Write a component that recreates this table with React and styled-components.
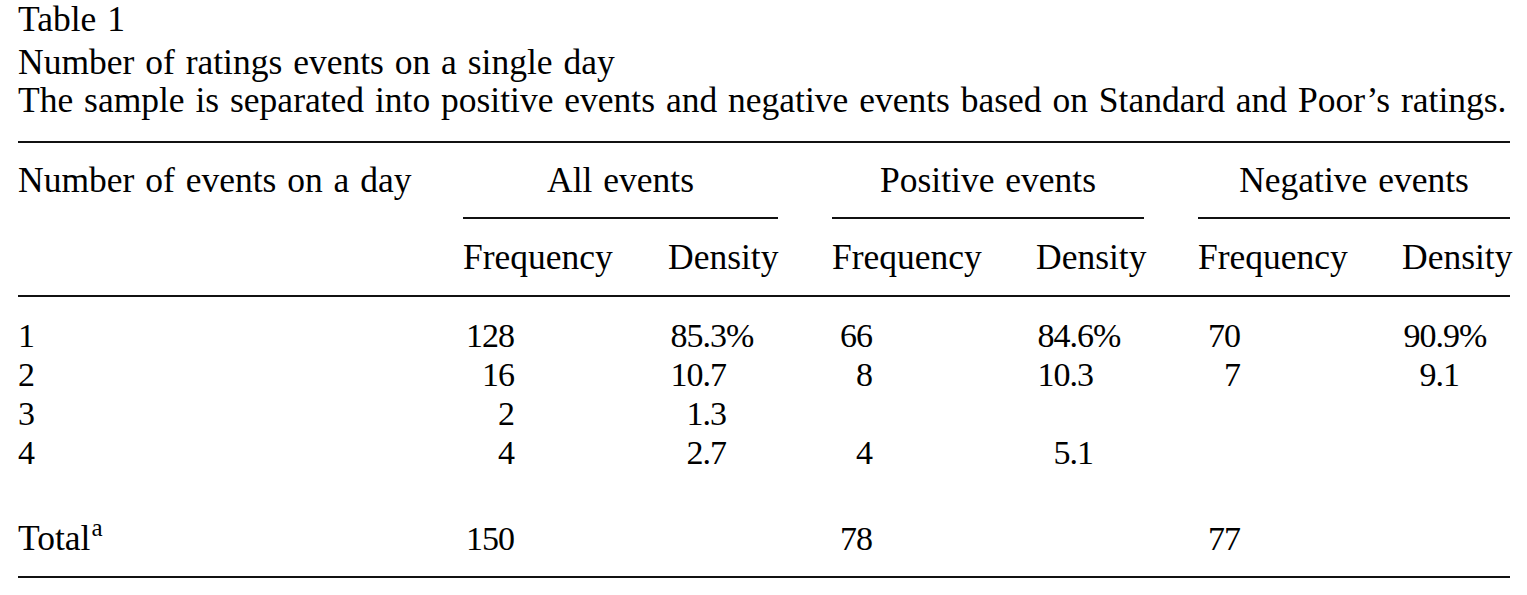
import React from "react";
import styled, { createGlobalStyle } from "styled-components";

const Global = createGlobalStyle`
  html, body { margin: 0; padding: 0; background: #fff; }
  body {
    font-family: "Liberation Serif", "Times New Roman", serif;
    color: #000;
  }
`;

const COLS = "445px 205px 110px 54px 204px 108px 54px 204px 108px";

const Page = styled.div`
  width: 1492px;
  padding-left: 18px;
  font-size: 35.5px;
  word-spacing: 2px;
`;

const Caption = styled.div`
  line-height: 38.5px;
`;

const TitleLine = styled.div`
  margin-bottom: ${(p) => p.$mb || 0}px;
`;

const Rule = styled.div`
  height: 2px;
  background: #111;
  margin-top: ${(p) => p.$mt || 0}px;
`;

const Row = styled.div`
  display: grid;
  grid-template-columns: ${COLS};
  line-height: ${(p) => p.$lh || 39}px;
  padding-top: ${(p) => p.$pt || 0}px;
  padding-bottom: ${(p) => p.$pb || 0}px;
`;

const Cell = styled.div`
  grid-column: ${(p) => p.$col};
  white-space: nowrap;
`;

const GroupHead = styled.div`
  grid-column: ${(p) => p.$col};
  text-align: center;
  padding-bottom: 17px;
  border-bottom: 2px solid #111;
  white-space: nowrap;
`;

const Num = styled.span`
  display: inline-block;
  width: ${(p) => p.$w}px;
  text-align: right;
  font-size: 34px;
  letter-spacing: -1px;
`;

const Plain = styled.span`
  font-size: 34px;
  letter-spacing: -1px;
`;

const Sup = styled.sup`
  font-size: 25px;
  line-height: 0;
  vertical-align: 0.55em;
  margin-left: 1px;
`;

const groups = [
  { key: "a", name: "All events", col: 2, f: 51, d: 58 },
  { key: "p", name: "Positive events", col: 5, f: 40, d: 57 },
  { key: "n", name: "Negative events", col: 8, f: 42, d: 57 },
];

const rows = [
  { label: "1", a: ["128", "85.3", "%"], p: ["66", "84.6", "%"], n: ["70", "90.9", "%"] },
  { label: "2", a: ["16", "10.7"], p: ["8", "10.3"], n: ["7", "9.1"] },
  { label: "3", a: ["2", "1.3"], p: [], n: [] },
  { label: "4", a: ["4", "2.7"], p: ["4", "5.1"], n: [] },
];

const totals = { a: "150", p: "78", n: "77" };

function DataCells({ row }) {
  return groups.map((g) => {
    const v = row[g.key] || [];
    return (
      <React.Fragment key={g.key}>
        <Cell $col={g.col}>{v[0] && <Num $w={g.f}>{v[0]}</Num>}</Cell>
        <Cell $col={g.col + 1}>
          {v[1] && <Num $w={g.d}>{v[1]}</Num>}
          {v[2] && <Plain>{v[2]}</Plain>}
        </Cell>
      </React.Fragment>
    );
  });
}

export default function App() {
  return (
    <>
      <Global />
      <Page>
        <Caption>
          <TitleLine $mb={4}>Table 1</TitleLine>
          <TitleLine>Number of ratings events on a single day</TitleLine>
          <TitleLine>
            The sample is separated into positive events and negative events based on Standard and Poor’s ratings.
          </TitleLine>
        </Caption>
        <Rule $mt={21} />
        <Row $lh={40} $pt={17}>
          <Cell $col={1}>Number of events on a day</Cell>
          {groups.map((g) => (
            <GroupHead key={g.key} $col={`${g.col} / span 2`}>
              {g.name}
            </GroupHead>
          ))}
        </Row>
        <Row $lh={40} $pt={18} $pb={18}>
          {groups.map((g) => (
            <React.Fragment key={g.key}>
              <Cell $col={g.col}>Frequency</Cell>
              <Cell $col={g.col + 1}>Density</Cell>
            </React.Fragment>
          ))}
        </Row>
        <Rule />
        <Row $pt={19}>
          <Cell $col={1}><Plain>1</Plain></Cell>
          <DataCells row={rows[0]} />
        </Row>
        {rows.slice(1).map((r) => (
          <Row key={r.label}>
            <Cell $col={1}><Plain>{r.label}</Plain></Cell>
            <DataCells row={r} />
          </Row>
        ))}
        <Row $pt={47} $pb={18}>
          <Cell $col={1}>
            Total<Sup>a</Sup>
          </Cell>
          {groups.map((g) => (
            <Cell key={g.key} $col={g.col}>
              <Num $w={g.f}>{totals[g.key]}</Num>
            </Cell>
          ))}
        </Row>
        <Rule />
      </Page>
    </>
  );
}
